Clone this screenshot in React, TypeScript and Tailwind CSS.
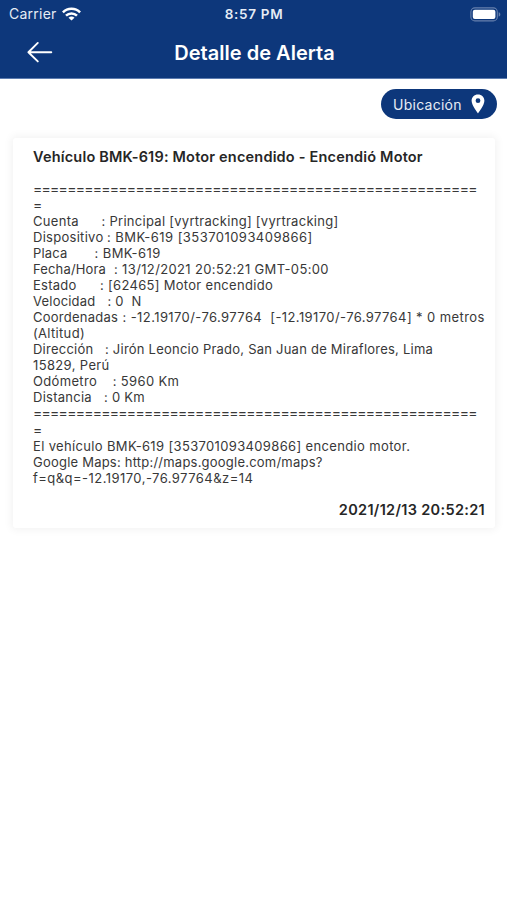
type Row = { label: string; labelClass: string; value?: string; valueClass?: string };

const rows: Row[] = [
  { label: "=".repeat(52), labelClass: "text-[14px] leading-[16.06px] tracking-[-0.73px]" },
  { label: "=", labelClass: "text-[14px] leading-[16.06px]" },
  { label: "Cuenta", labelClass: "w-[68.5px] tracking-[0.3px]", value: ": Principal [vyrtracking] [vyrtracking]", valueClass: "tracking-[0.28px]" },
  { label: "Dispositivo", labelClass: "w-[74px] tracking-[0.28px]", value: ": BMK-619 [353701093409866]", valueClass: "tracking-[0.46px]" },
  { label: "Placa", labelClass: "w-[61.5px] tracking-[0.2px]", value: ": BMK-619", valueClass: "tracking-[0.42px]" },
  { label: "Fecha/Hora", labelClass: "w-[81px] tracking-[0.15px]", value: ": 13/12/2021 20:52:21 GMT-05:00", valueClass: "tracking-[0.36px]" },
  { label: "Estado", labelClass: "w-[67px] tracking-[0.25px]", value: ": [62465] Motor encendido", valueClass: "tracking-[0.3px]" },
  { label: "Velocidad", labelClass: "w-[74.5px] tracking-[0.2px]", value: ": 0  N", valueClass: "tracking-[0.2px]" },
  { label: "Coordenadas", labelClass: "w-[89.5px] tracking-[0.24px]", value: ": -12.19170/-76.97764  [-12.19170/-76.97764] * 0 metros", valueClass: "tracking-[0.41px]" },
  { label: "(Altitud)", labelClass: "tracking-[0.32px]" },
  { label: "Dirección", labelClass: "w-[72px] tracking-[0.24px]", value: ": Jirón Leoncio Prado, San Juan de Miraflores, Lima", valueClass: "tracking-[0.23px]" },
  { label: "15829, Perú", labelClass: "tracking-[0.36px]" },
  { label: "Odómetro", labelClass: "w-[79.7px] tracking-[0.34px]", value: ": 5960 Km", valueClass: "tracking-[0.36px]" },
  { label: "Distancia", labelClass: "w-[71px] tracking-[0.26px]", value: ": 0 Km", valueClass: "tracking-[0.24px]" },
  { label: "=".repeat(52), labelClass: "text-[14px] leading-[16.06px] tracking-[-0.73px]" },
  { label: "=", labelClass: "text-[14px] leading-[16.06px]" },
  { label: "El vehículo BMK-619 [353701093409866] encendio motor.", labelClass: "tracking-[0.35px]" },
  { label: "Google Maps: http://maps.google.com/maps?", labelClass: "tracking-[0.22px]" },
  { label: "f=q&q=-12.19170,-76.97764&z=14", labelClass: "tracking-[0.46px]" },
];

function WifiIcon() {
  return (
    <svg width="19" height="14" viewBox="0 0 19 14" fill="none" stroke="white" strokeWidth="2.5">
      <path d="M0.9 5.3C5.6 0.6 13.4 0.6 18.1 5.3" />
      <path d="M4 8.6C7 5.7 12 5.7 15 8.6" />
      <path d="M9.5 13.6L6.5 10.7C8.1 9.2 10.9 9.2 12.5 10.7Z" fill="white" stroke="none" />
    </svg>
  );
}

function BatteryIcon() {
  return (
    <svg width="31" height="15" viewBox="0 0 31 15" fill="none">
      <rect x="0.9" y="0.9" width="26.4" height="13" rx="4" stroke="#6780ad" strokeWidth="1.1" />
      <rect x="2.8" y="2.7" width="22.6" height="9.4" rx="2" fill="white" />
      <path d="M28.7 5.2C30.9 5.9 30.9 8.9 28.7 9.6Z" fill="#6780ad" />
    </svg>
  );
}

function StatusBar() {
  return (
    <div className="grid h-7 grid-cols-3 items-center text-white">
      <div className="flex items-center gap-[5px] pl-[9px]">
        <span className="text-[14px] leading-7 tracking-[0.24px] text-[#e6ecf5]">Carrier</span>
        <WifiIcon />
      </div>
      <span className="pl-px text-center text-[13.5px] leading-7 font-semibold tracking-[0.7px] text-[#e6ecf5]">8:57 PM</span>
      <div className="flex justify-end pr-[6px]">
        <BatteryIcon />
      </div>
    </div>
  );
}

export default function App() {
  return (
    <div className="h-[900px] w-[507px] overflow-hidden bg-white font-['Inter',sans-serif]">
      <header className="h-[79px] border-b border-[#5c7cb0] bg-[#0d377b]">
        <StatusBar />
        <div className="grid h-12 grid-cols-[80px_1fr_78px] items-center">
          <svg className="mb-px ml-[26px]" width="28" height="24" viewBox="0 0 28 24" fill="none" stroke="white" strokeWidth="1.9" strokeLinecap="round" strokeLinejoin="round">
            <path d="M25.3 12.2H2.4M11.8 2.9L2.4 12.2L11.8 21.4" />
          </svg>
          <h1 className="pt-px text-center text-[20px] leading-[48px] font-semibold tracking-[0.02px] text-white">Detalle de Alerta</h1>
        </div>
      </header>

      <div className="flex justify-end pt-[10px] pr-[10px]">
        <button className="flex h-[30px] w-[116px] items-center rounded-full bg-[#0d377b] pl-[12px] text-white">
          <span className="text-[14px] tracking-[0.26px] text-[#e6ecf5]">Ubicación</span>
          <svg className="ml-[9.5px]" width="14" height="20" viewBox="0 0 14 20" fill="white">
            <path fillRule="evenodd" d="M7 0.6C3.3 0.6 0.6 3.3 0.6 6.8C0.6 11.4 7 19.4 7 19.4S13.4 11.4 13.4 6.8C13.4 3.3 10.7 0.6 7 0.6ZM7 4.3A2.4 2.4 0 1 1 7 9.1A2.4 2.4 0 1 1 7 4.3Z" />
          </svg>
        </button>
      </div>

      <main className="mt-[19px] mr-[12px] ml-[13px] h-[390px] rounded-[3px] bg-white pt-[10px] pr-[10px] pl-[20px] text-[#383838] shadow-[0_0_8px_2px_rgba(0,0,0,0.05)]">
        <h2 className="text-[14.5px] leading-[18px] font-semibold tracking-[0.19px] whitespace-nowrap text-[#262626]">
          Vehículo BMK-619: Motor encendido - Encendió Motor
        </h2>
        <div className="mt-[14.6px] text-[13px] leading-[16.06px] whitespace-pre">
          {rows.map((row, index) => (
            <div key={index} className="flex">
              <span className={row.labelClass}>{row.label}</span>
              {row.value && <span className={row.valueClass}>{row.value}</span>}
            </div>
          ))}
        </div>
        <p className="mt-[15px] text-right text-[14.5px] leading-[18px] font-semibold tracking-[0.32px] text-[#262626]">
          2021/12/13 20:52:21
        </p>
      </main>
    </div>
  );
}
